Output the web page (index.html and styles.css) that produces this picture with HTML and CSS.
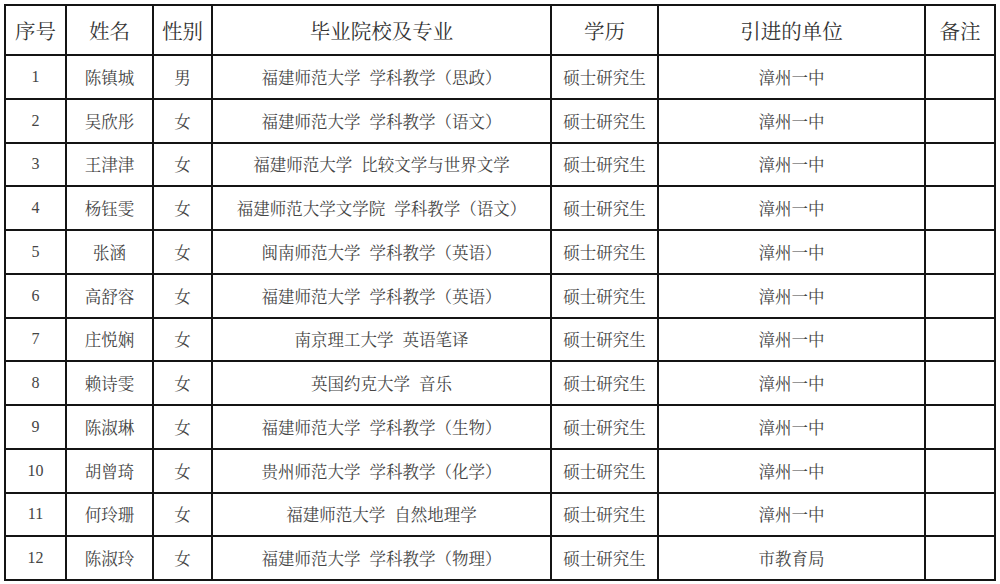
FILE: index.html
```html
<!DOCTYPE html>
<html lang="zh-CN">
<head>
<meta charset="utf-8">
<title>引进人才名单</title>
<link rel="stylesheet" href="styles.css">
</head>
<body>
<div class="page">
<table class="roster">
  <colgroup>
    <col class="c-no">
    <col class="c-name">
    <col class="c-sex">
    <col class="c-school">
    <col class="c-degree">
    <col class="c-unit">
    <col class="c-note">
  </colgroup>
  <thead>
    <tr>
      <th>序号</th><th>姓名</th><th>性别</th><th>毕业院校及专业</th><th>学历</th><th>引进的单位</th><th>备注</th>
    </tr>
  </thead>
  <tbody>
    <tr><td class="num">1</td><td>陈镇城</td><td>男</td><td>福建师范大学 学科教学（思政）</td><td>硕士研究生</td><td>漳州一中</td><td></td></tr>
    <tr><td class="num">2</td><td>吴欣彤</td><td>女</td><td>福建师范大学 学科教学（语文）</td><td>硕士研究生</td><td>漳州一中</td><td></td></tr>
    <tr><td class="num">3</td><td>王津津</td><td>女</td><td>福建师范大学 比较文学与世界文学</td><td>硕士研究生</td><td>漳州一中</td><td></td></tr>
    <tr><td class="num">4</td><td>杨钰雯</td><td>女</td><td>福建师范大学文学院 学科教学（语文）</td><td>硕士研究生</td><td>漳州一中</td><td></td></tr>
    <tr><td class="num">5</td><td>张涵</td><td>女</td><td>闽南师范大学 学科教学（英语）</td><td>硕士研究生</td><td>漳州一中</td><td></td></tr>
    <tr><td class="num">6</td><td>高舒容</td><td>女</td><td>福建师范大学 学科教学（英语）</td><td>硕士研究生</td><td>漳州一中</td><td></td></tr>
    <tr><td class="num">7</td><td>庄悦娴</td><td>女</td><td>南京理工大学 英语笔译</td><td>硕士研究生</td><td>漳州一中</td><td></td></tr>
    <tr><td class="num">8</td><td>赖诗雯</td><td>女</td><td>英国约克大学 音乐</td><td>硕士研究生</td><td>漳州一中</td><td></td></tr>
    <tr><td class="num">9</td><td>陈淑琳</td><td>女</td><td>福建师范大学 学科教学（生物）</td><td>硕士研究生</td><td>漳州一中</td><td></td></tr>
    <tr><td class="num">10</td><td>胡曾琦</td><td>女</td><td>贵州师范大学 学科教学（化学）</td><td>硕士研究生</td><td>漳州一中</td><td></td></tr>
    <tr><td class="num">11</td><td>何玲珊</td><td>女</td><td>福建师范大学 自然地理学</td><td>硕士研究生</td><td>漳州一中</td><td></td></tr>
    <tr><td class="num">12</td><td>陈淑玲</td><td>女</td><td>福建师范大学 学科教学（物理）</td><td>硕士研究生</td><td>市教育局</td><td></td></tr>
  </tbody>
</table>
</div>
</body>
</html>
```

FILE: styles.css
```css
html, body {
  margin: 0;
  padding: 0;
  background: #ffffff;
}

.page {
  padding: 4px 0 0 4px;
}

.roster {
  border-collapse: collapse;
  table-layout: fixed;
  width: 990px;
  font-family: "Noto Serif CJK SC", "Liberation Serif", "Noto Sans CJK SC", serif;
  color: #454545;
}

.roster th,
.roster td {
  border: 2px solid #141414;
  padding: 0;
  text-align: center;
  vertical-align: middle;
  white-space: nowrap;
  overflow: hidden;
}

.roster th {
  height: 48px;
  font-size: 20.5px;
  font-weight: normal;
  color: #333333;
}

.roster tbody tr {
  height: 43.75px;
}

.roster td {
  font-size: 16.5px;
  word-spacing: 5px;
}

.roster td.num {
  font-family: "Liberation Serif", serif;
  font-size: 16px;
}

.c-no { width: 61px; }
.c-name { width: 87px; }
.c-sex { width: 59px; }
.c-school { width: 339px; }
.c-degree { width: 107px; }
.c-unit { width: 267px; }
.c-note { width: 70px; }
```
